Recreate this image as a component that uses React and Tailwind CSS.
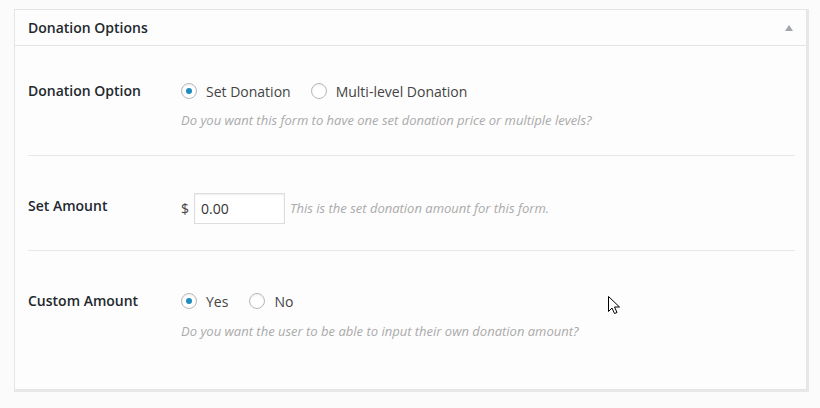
const font = { fontFamily: '"Open Sans", "Liberation Sans", sans-serif' };

function Radio({ checked, label }) {
  return (
    <label className="flex items-center">
      <span className="flex h-4 w-4 items-center justify-center rounded-full border border-[#b4b9be] bg-white shadow-[inset_0_1px_2px_rgba(0,0,0,0.07)]">
        {checked && <span className="h-[6px] w-[6px] rounded-full bg-[#1e8cbe]" />}
      </span>
      <span className="ml-[9px] text-[14px] text-[#444]">{label}</span>
    </label>
  );
}

function Cursor() {
  return (
    <svg width="13" height="19" viewBox="0 0 13 19" className="absolute left-[608px] top-[296px]">
      <path
        d="M0.5 0.5 L0.5 15.5 L4 12 L6.5 17.5 L9 16.5 L6.5 11 L11.5 11 Z"
        fill="#fff"
        stroke="#000"
        strokeWidth="1"
        strokeLinejoin="miter"
      />
    </svg>
  );
}

export default function App() {
  return (
    <div className="relative h-[408px] w-[820px] bg-[#fbfbfb] pl-[14px] pt-[9px]" style={font}>
      <div className="h-[381px] w-[793px] border border-[#e5e5e5] bg-[#fdfdfd] shadow-[1px_1px_0_1px_#e8e8e8]">
        <div className="flex h-[36px] items-center justify-between border-b border-[#e5e5e5] pl-[13px] pr-[13px]">
          <h2 className="text-[14px] font-semibold text-[#23282d]">Donation Options</h2>
          <span className="h-0 w-0 border-x-[4px] border-b-[6px] border-x-transparent border-b-[#a0a5aa]" />
        </div>

        <div className="pl-[13px] pr-[11px]">
          <div className="flex border-b border-[#e8e8e8] pb-[26px] pt-[35px]">
            <div className="w-[153px] text-[14px] font-semibold leading-5 text-[#23282d]">Donation Option</div>
            <div>
              <div className="flex h-5 items-center gap-[20px]">
                <Radio checked label="Set Donation" />
                <Radio label="Multi-level Donation" />
              </div>
              <p className="mt-[10px] text-[13px] italic leading-[18px] text-[#aaa]">
                Do you want this form to have one set donation price or multiple levels?
              </p>
            </div>
          </div>

          <div className="flex border-b border-[#e8e8e8] pb-[26px] pt-[37px]">
            <div className="w-[153px] pt-[3px] text-[14px] font-semibold leading-5 text-[#23282d]">Set Amount</div>
            <div className="flex items-center">
              <span className="mr-[5px] text-[14px] text-[#444]">$</span>
              <input
                readOnly
                value="0.00"
                className="h-[31px] w-[91px] border border-[#ddd] bg-white px-[6px] text-[14px] text-[#333] shadow-[inset_0_1px_2px_rgba(0,0,0,0.07)] outline-none"
                style={font}
              />
              <span className="ml-[5px] text-[13px] italic text-[#aaa]">This is the set donation amount for this form.</span>
            </div>
          </div>

          <div className="flex pt-[40px]">
            <div className="w-[153px] text-[14px] font-semibold leading-5 text-[#23282d]">Custom Amount</div>
            <div>
              <div className="flex h-5 items-center gap-[21px]">
                <Radio checked label="Yes" />
                <Radio label="No" />
              </div>
              <p className="mt-[11px] text-[13px] italic leading-[18px] text-[#aaa]">
                Do you want the user to be able to input their own donation amount?
              </p>
            </div>
          </div>
        </div>
      </div>
      <Cursor />
    </div>
  );
}
